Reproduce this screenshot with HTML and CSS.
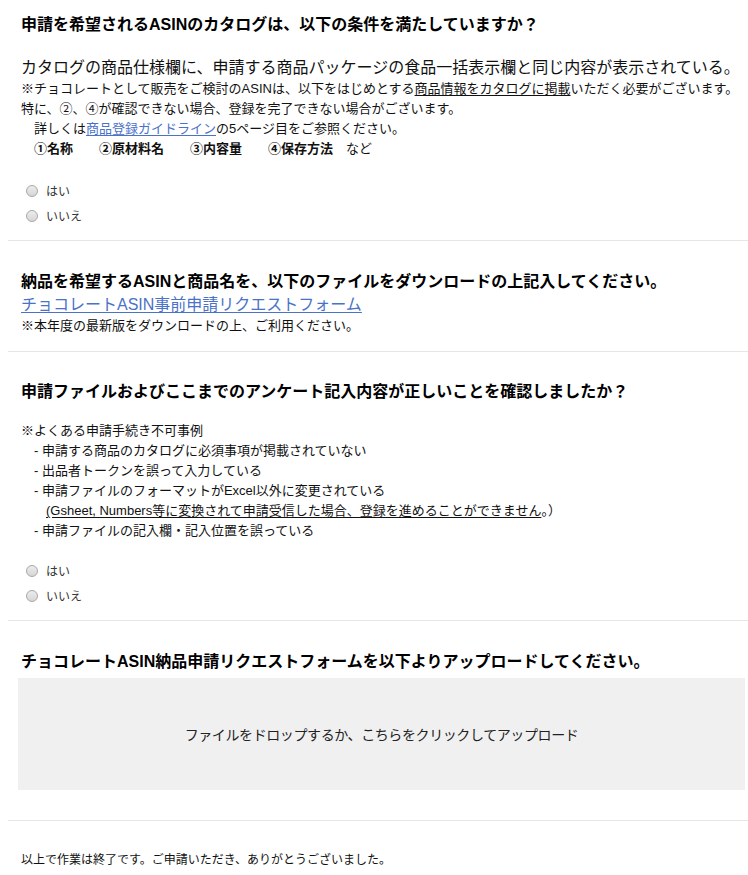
FILE: index.html
```html
<!DOCTYPE html>
<html lang="ja">
<head>
  <meta charset="UTF-8">
  <meta name="viewport" content="width=device-width, initial-scale=1.0">
  <title>チョコレートASIN申請</title>
  <link rel="stylesheet" href="styles.css">
</head>
<body>
  <div class="page">

    <div class="section sec-first">
      <h2 class="q-title">申請を希望されるASINのカタログは、以下の条件を満たしていますか？</h2>
      <p class="lead">カタログの商品仕様欄に、申請する商品パッケージの食品一括表示欄と同じ内容が表示されている。</p>
      <p class="note">※チョコレートとして販売をご検討のASINは、以下をはじめとする<u>商品情報をカタログに掲載</u>いただく必要がございます。</p>
      <p class="note">特に、②、④が確認できない場合、登録を完了できない場合がございます。</p>
      <p class="note indent">詳しくは<a href="#" class="link">商品登録ガイドライン</a>の5ページ目をご参照ください。</p>
      <p class="note indent"><b>①名称　　②原材料名　　③内容量　　④保存方法</b>　など</p>
      <div class="choices">
        <label class="choice"><input type="radio" name="q1"><span>はい</span></label>
        <label class="choice"><input type="radio" name="q1"><span>いいえ</span></label>
      </div>
    </div>

    <div class="section sec-second">
      <h2 class="q-title">納品を希望するASINと商品名を、以下のファイルをダウンロードの上記入してください。</h2>
      <a href="#" class="link big-link">チョコレートASIN事前申請リクエストフォーム</a>
      <p class="note">※本年度の最新版をダウンロードの上、ご利用ください。</p>
    </div>

    <div class="section sec-third">
      <h2 class="q-title">申請ファイルおよびここまでのアンケート記入内容が正しいことを確認しましたか？</h2>
      <p class="note list-head">※よくある申請手続き不可事例</p>
      <p class="note indent">- 申請する商品のカタログに必須事項が掲載されていない</p>
      <p class="note indent">- 出品者トークンを誤って入力している</p>
      <p class="note indent">- 申請ファイルのフォーマットがExcel以外に変更されている</p>
      <p class="note indent2"><u>(Gsheet, Numbers等に変換されて申請受信した場合、登録を進めることができません</u>。）</p>
      <p class="note indent">- 申請ファイルの記入欄・記入位置を誤っている</p>
      <div class="choices">
        <label class="choice"><input type="radio" name="q3"><span>はい</span></label>
        <label class="choice"><input type="radio" name="q3"><span>いいえ</span></label>
      </div>
    </div>

    <div class="section sec-fourth">
      <h2 class="q-title">チョコレートASIN納品申請リクエストフォームを以下よりアップロードしてください。</h2>
      <div class="dropzone">ファイルをドロップするか、こちらをクリックしてアップロード</div>
    </div>

    <div class="section sec-last">
      <p class="closing">以上で作業は終了です。ご申請いただき、ありがとうございました。</p>
    </div>

  </div>
</body>
</html>
```

FILE: styles.css
```css
/* 基本 */
body { margin: 0; font-family: "Liberation Sans", "Noto Sans CJK JP", sans-serif; color: #111; background: #fff; }
.page { padding-left: 8px; }
p { margin: 0; }

/* セクション */
.section { padding: 0 3px 0 13px; border-bottom: 1px solid #e5e5e5; }
.sec-first { padding-top: 14px; padding-bottom: 12px; }
.sec-second { padding-top: 30px; padding-bottom: 15px; }
.sec-third { padding-top: 29px; padding-bottom: 12px; }
.sec-fourth { padding-top: 30px; padding-bottom: 30px; }
.sec-last { padding-top: 29px; border-bottom: none; }

.q-title { margin: 0; font-size: 16px; line-height: 22px; font-weight: bold; color: #000; white-space: nowrap; }
.lead { margin-top: 21px; font-size: 16px; line-height: 22px; white-space: nowrap; }
.note { font-size: 13px; line-height: 20px; white-space: nowrap; }
.note u { text-decoration: underline; text-underline-offset: 2px; }
.indent { padding-left: 13px; }
.indent2 { padding-left: 25px; }
.list-head { margin-top: 18px; }

.link { color: #4a72c8; text-decoration: underline; text-underline-offset: 2px; }
.big-link { display: block; font-size: 16px; line-height: 22px; margin-top: 1px; }

/* ラジオ */
.choices { margin-top: 19px; }
.sec-third .choices { margin-top: 17px; }
.choice { display: flex; align-items: center; height: 25px; font-size: 12px; color: #333; cursor: pointer; }
.choice input { appearance: none; -webkit-appearance: none; margin: 0 8px 0 5px; width: 12px; height: 12px; border-radius: 50%; border: 1px solid #a8a8a8; background: linear-gradient(#ececec, #d6d6d6); box-sizing: border-box; }
.choice input:checked { background: radial-gradient(#444 30%, #e6e6e6 36%); }

/* アップロード */
.dropzone { margin: 5px 0 0 -3px; height: 112px; background: #f0f0f0; display: flex; align-items: center; justify-content: center; font-size: 14px; color: #222; letter-spacing: -0.4px; }

.closing { font-size: 12px; line-height: 20px; }
```
